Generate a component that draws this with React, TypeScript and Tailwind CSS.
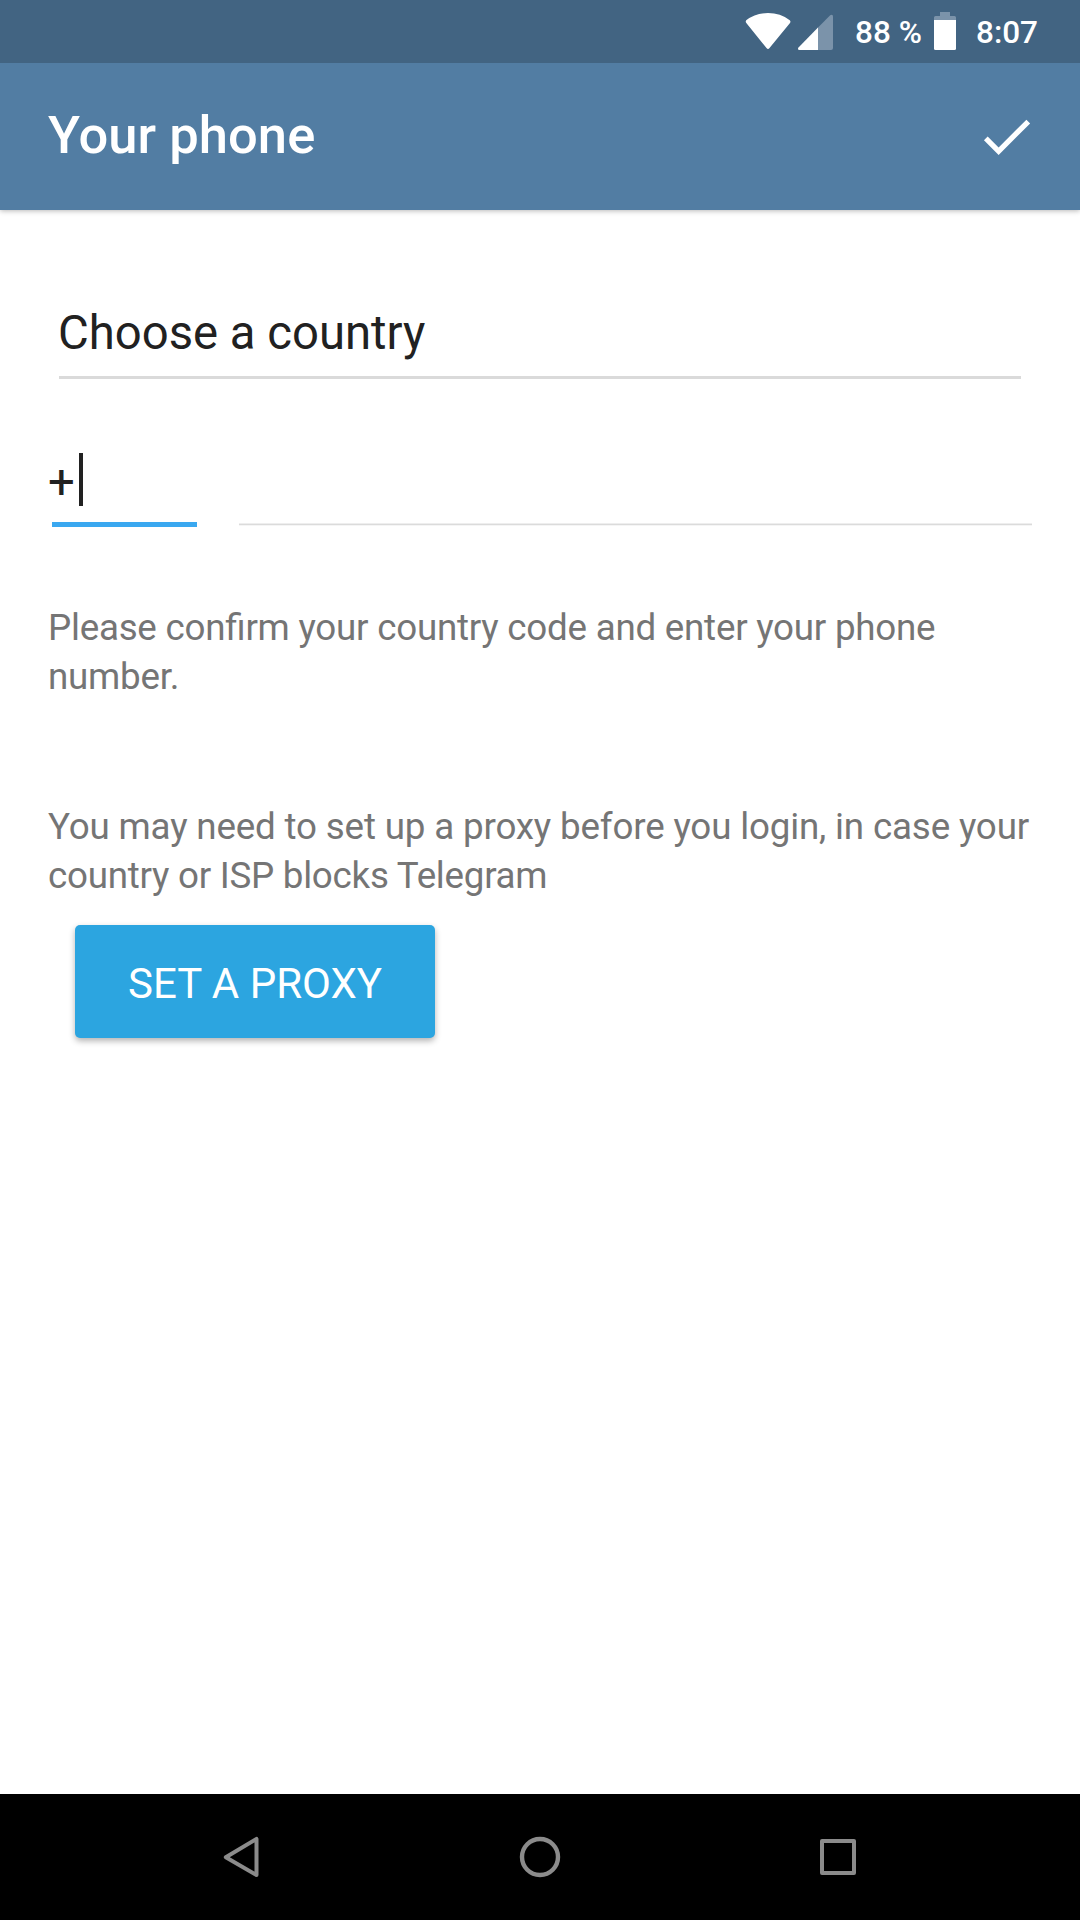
function StatusBar() {
  return (
    <div className="relative z-10 flex h-[63px] bg-[#426482] pl-[745px] text-[31.5px] leading-[66px] font-medium whitespace-pre text-white">
      <svg className="mt-[12px] h-[38px] w-[47px] shrink-0" viewBox="0 0 47 38">
        <path d="M1.2 8.2Q0.2 9.6 1.3 10.9L21.5 36Q23 37.8 24.5 36L45 10.9Q46 9.6 44.8 8.2Q35.5 1 23 1Q10.5 1 1.2 8.2Z" fill="#fff" />
      </svg>
      <svg className="mt-[14px] ml-[5px] h-[37px] w-[37px] shrink-0" viewBox="0 0 37 37">
        <path d="M20 14.5L33.2 1.2Q36 0 36 2.5V34Q36 36 34 36H20Z" fill="#7b93aa" />
        <path d="M21 13.5V36H2.5Q0 35.5 1.5 33.5Z" fill="#fff" />
      </svg>
      <span className="ml-[21px] w-[79px]">88 %</span>
      <svg className="mt-[12px] h-[38px] w-[22px] shrink-0" viewBox="0 0 22 38">
        <path d="M6 0H16V4H20.5Q22 4 22 5.5V8H0V5.5Q0 4 1.5 4H6Z" fill="#7b93aa" />
        <path d="M0 8H22V36.5Q22 38 20.5 38H1.5Q0 38 0 36.5Z" fill="#fff" />
      </svg>
      <span className="ml-[20px]">8:07</span>
    </div>
  );
}

function Toolbar() {
  return (
    <header className="relative flex h-[147px] items-center justify-between bg-[#527da3] pr-[42px] pl-[48px] text-white shadow-[0_1px_5px_rgba(0,0,0,0.28)]">
      <h1 className="pb-[2px] text-[52.5px] font-medium tracking-[0.05px]">Your phone</h1>
      <svg className="size-[63px]" viewBox="0 0 24 24" fill="currentColor">
        <path d="M9 16.17L4.83 12l-1.42 1.41L9 19 21 7l-1.41-1.41z" />
      </svg>
    </header>
  );
}

function NavigationBar() {
  return (
    <nav className="flex h-[126px] items-center justify-between bg-black px-[218px] text-[#8b8b8b]">
      <svg className="size-[48px]" viewBox="0 0 48 48" fill="none" stroke="currentColor" strokeWidth="4" strokeLinejoin="round">
        <path d="M7.8 24.2L38.5 5.9V42.1Z" />
      </svg>
      <svg className="size-[48px]" viewBox="0 0 48 48" fill="none" stroke="currentColor" strokeWidth="4.4">
        <circle cx="24" cy="24" r="18" />
      </svg>
      <svg className="size-[48px]" viewBox="0 0 48 48" fill="none" stroke="currentColor" strokeWidth="4" strokeLinejoin="round">
        <path d="M8 8H40V40H8Z" />
      </svg>
    </nav>
  );
}

export default function App() {
  return (
    <div className="flex h-[1920px] w-[1080px] flex-col bg-white font-[Roboto,sans-serif]">
      <StatusBar />
      <Toolbar />
      <main className="flex flex-1 flex-col items-start">
        <div className="mt-[80px] ml-[59px] h-[89px] w-[962px] border-b-[3px] border-[#dadada] text-[47.25px] leading-[86px] text-[#212121]">
          <span className="-ml-px">Choose a country</span>
        </div>
        <div className="mt-[68px] ml-[48px] flex h-[80px] items-start">
          <div className="ml-[4px] flex h-[80px] w-[145px] border-b-[5px] border-[#3aa8f0] text-[47.25px] leading-[71px] text-[#212121]">
            <span className="-ml-[4px] w-[31px]">+</span>
            <span className="mt-[6px] h-[53px] w-[4px] bg-[#212121]" />
          </div>
          <div className="ml-[42px] flex h-[79px] w-[793px] flex-col justify-end">
            <div className="h-px bg-[#eeeeee]" />
            <div className="h-px bg-[#dbdbdb]" />
            <div className="h-px bg-[#f5f5f5]" />
          </div>
        </div>
        <p className="mt-[76px] ml-[48px] text-[36.75px] leading-[49px] tracking-[-0.24px] whitespace-nowrap text-[#757575] [font-feature-settings:'liga'_1]">
          Please confirm your country code and enter your phone
          <br />
          number.
        </p>
        <p className="mt-[101px] ml-[48px] text-[36.75px] leading-[49px] tracking-[-0.17px] whitespace-nowrap text-[#757575]">
          You may need to set up a proxy before you login, in case your
          <br />
          <span className="tracking-[-0.26px]">country or ISP blocks Telegram</span>
        </p>
        <button className="mt-[25px] ml-[75px] h-[113px] w-[360px] rounded-[5px] bg-[#2ca5e0] pt-[4px] text-[42px] leading-[109px] text-white shadow-[0_3px_6px_rgba(0,0,0,0.3)]">
          SET A PROXY
        </button>
      </main>
      <NavigationBar />
    </div>
  );
}
